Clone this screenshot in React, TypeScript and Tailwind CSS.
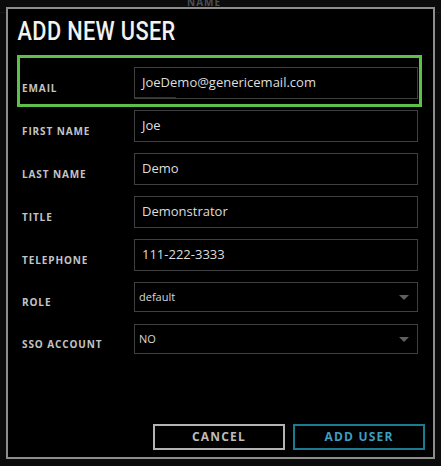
const sans = { fontFamily: '"Open Sans", "Noto Sans", sans-serif' };

function Row({ label, value, select }: { label: string; value: string; select?: boolean }) {
  return (
    <div className="flex items-start">
      <div
        className={`relative top-[5px] w-[112px] ${select ? 'leading-[30px]' : 'leading-[32px]'} text-[10px] font-bold tracking-[0.9px] text-[#c4c4c4]`}
      >
        {label}
      </div>
      {select ? (
        <div className="relative flex h-[30px] w-[284px] items-center border border-[#3f3f3f] bg-black pl-[4px] text-[11px] text-[#d8d8d8]">
          {value}
          <span className="absolute right-[8px] top-[12px] h-0 w-0 border-x-[5px] border-t-[5px] border-x-transparent border-t-[#5f5f5f]" />
        </div>
      ) : (
        <div className="relative flex h-[32px] w-[284px] items-center border border-[#3f3f3f] bg-black pl-[7px] text-[13px] text-[#dedede]">
          {value}
        </div>
      )}
    </div>
  );
}

export default function App() {
  return (
    <div className="relative h-[466px] w-[441px] overflow-hidden bg-[#0b0b0b]" style={sans}>
      <div className="absolute left-0 top-[12px] h-px w-[441px] bg-[#161616]" />
      <div className="absolute left-[187px] top-[-5px] text-[10px] font-bold tracking-[1px] text-[#4a4f55]">NAME</div>

      <div className="absolute left-[6px] top-[7px] flex h-[452px] w-[429px] flex-col border-2 border-[#8d8d8d] bg-black">
        <h1
          className="origin-left scale-x-[0.87] pl-[11px] pt-[10px] text-[25px] font-medium leading-[25px] tracking-[0.4px] text-[#f2f2f2]"
          style={{ fontFamily: 'Roboto, "Liberation Sans", sans-serif' }}
        >
          ADD NEW USER
        </h1>

        <div className="mt-[23px] flex flex-col gap-[11px] pl-[14px]">
          <div className="relative">
            <Row label="EMAIL" value="JoeDemo@genericemail.com" />
            <span className="absolute bottom-[1px] left-[113px] h-px w-[41px] bg-[#6a1c1c]" />
          </div>
          <Row label="FIRST NAME" value="Joe" />
          <Row label="LAST NAME" value="Demo" />
          <Row label="TITLE" value="Demonstrator" />
          <Row label="TELEPHONE" value="111-222-3333" />
          <div className="flex flex-col gap-[12px]">
            <Row label="ROLE" value="default" select />
            <Row label="SSO ACCOUNT" value="NO" select />
          </div>
        </div>

        <div className="mt-auto flex justify-end gap-[8px] pb-[7px] pr-[8px]">
          <button className="h-[26px] w-[132px] border-2 border-[#b3b3b3] text-[12px] font-bold tracking-[1.2px] text-[#bdbdbd]">
            CANCEL
          </button>
          <button className="h-[26px] w-[132px] border-2 border-[#1d7a93] text-[12px] font-bold tracking-[1.2px] text-[#3a9ec3]">
            ADD USER
          </button>
        </div>

        <div className="absolute left-[9px] top-[46px] h-[52px] w-[405px] border-[3px] border-[#5ec04b]" />
      </div>
    </div>
  );
}
